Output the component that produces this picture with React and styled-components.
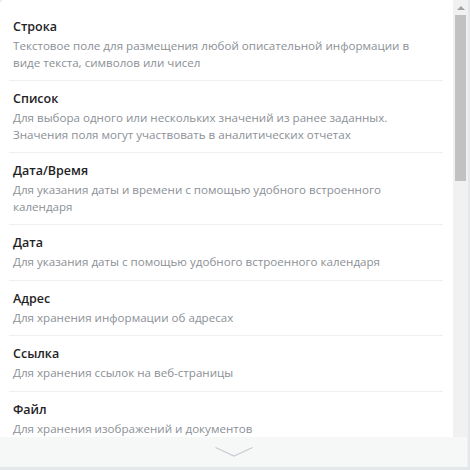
import React from "react";
import styled, { createGlobalStyle } from "styled-components";

const Global = createGlobalStyle`
  html, body { margin: 0; padding: 0; }
  body {
    background: #e4e8eb;
    font-family: "Open Sans", "Noto Sans", sans-serif;
    -webkit-font-smoothing: antialiased;
  }
`;

const Panel = styled.div`
  position: relative;
  width: 468px;
  height: 467px;
  display: flex;
  background: #ffffff;
  border-top-left-radius: 4px;
  overflow: hidden;
`;

const List = styled.ul`
  flex: 1;
  list-style: none;
  margin: 0;
  padding: 9px 10px 0 9px;
  overflow: hidden;
`;

const Item = styled.li`
  padding: 9px 15px 9px 4px;
  border-bottom: 1px solid ${(p) => (p.$last ? "transparent" : "#eff0f1")};
`;

const Title = styled.div`
  font-size: 12.5px;
  line-height: 18px;
  font-weight: 600;
  color: #1f2326;
`;

const Desc = styled.div`
  margin-top: 2px;
  font-size: 11.6px;
  line-height: 16.5px;
  color: #8b9096;
`;

const Scrollbar = styled.div`
  width: 15px;
  background: #f1f1f1;
  display: flex;
  flex-direction: column;
  align-items: center;
`;

const ArrowUp = styled.div`
  height: 15px;
  width: 15px;
  display: flex;
  align-items: center;
  justify-content: center;
  &::before {
    content: "";
    border-left: 4px solid transparent;
    border-right: 4px solid transparent;
    border-bottom: 4px solid #a3a3a3;
  }
`;

const Thumb = styled.div`
  width: 11px;
  height: 166px;
  background: #c1c1c1;
`;

const Footer = styled.div`
  position: absolute;
  left: 0;
  right: 1px;
  bottom: 0;
  height: 30px;
  background: #f6f8f8;
  display: flex;
  align-items: center;
  justify-content: center;
`;

const items = [
  ["Строка", "Текстовое поле для размещения любой описательной информации в виде текста, символов или чисел"],
  ["Список", "Для выбора одного или нескольких значений из ранее заданных. Значения поля могут участвовать в аналитических отчетах"],
  ["Дата/Время", "Для указания даты и времени с помощью удобного встроенного календаря"],
  ["Дата", "Для указания даты с помощью удобного встроенного календаря"],
  ["Адрес", "Для хранения информации об адресах"],
  ["Ссылка", "Для хранения ссылок на веб-страницы"],
  ["Файл", "Для хранения изображений и документов"],
];

export default function App() {
  return (
    <>
      <Global />
      <Panel>
        <List>
          {items.map(([t, d], i) => (
            <Item key={t} $last={i === items.length - 1}>
              <Title>{t}</Title>
              <Desc>{d}</Desc>
            </Item>
          ))}
        </List>
        <Scrollbar>
          <ArrowUp />
          <Thumb />
        </Scrollbar>
        <Footer>
          <svg width="40" height="12" viewBox="0 0 40 12">
            <polyline
              points="1.5,1.5 20,10 38.5,1.5"
              fill="none"
              stroke="#c9cdd1"
              strokeWidth="1.3"
            />
          </svg>
        </Footer>
      </Panel>
    </>
  );
}
